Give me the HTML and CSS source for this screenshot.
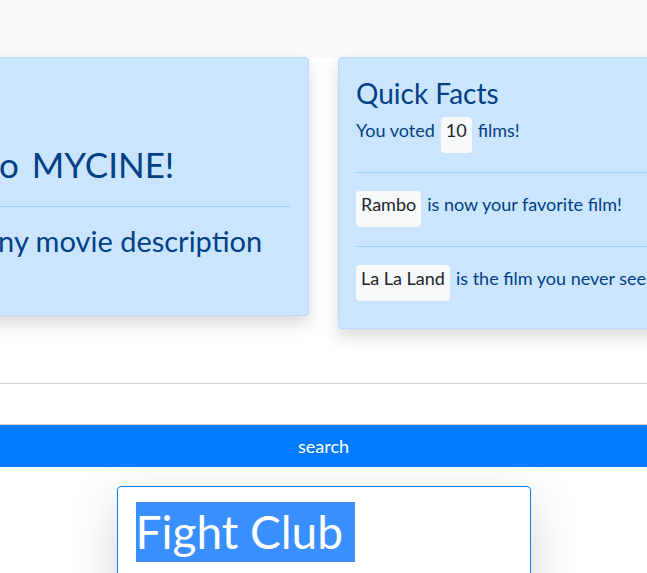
FILE: index.html
```html
<!DOCTYPE html>
<html lang="en">
<head>
<meta charset="utf-8">
<title>MYCINE</title>
<link rel="stylesheet" href="styles.css">
</head>
<body>
<div class="topbar"></div>
<div class="cards">
  <section class="card welcome">
    <h1 class="welcome-title">Welcome to MYCINE!</h1>
    <hr class="card-rule">
    <p class="welcome-text">You can get any movie description</p>
  </section>
  <section class="card facts">
    <h3 class="facts-title">Quick Facts</h3>
    <div class="fact"><span>You voted</span><span class="badge">10</span><span>films!</span></div>
    <hr class="card-rule">
    <div class="fact"><span class="badge">Rambo</span><span>is now your favorite film!</span></div>
    <hr class="card-rule">
    <div class="fact"><span class="badge">La La Land</span><span>is the film you never seen!</span></div>
  </section>
</div>
<hr class="page-rule">
<button class="search-bar" type="button">search</button>
<div class="search-box">
  <span class="selected">Fight Club </span>
</div>
</body>
</html>
```
FILE: styles.css
```css
* { box-sizing: border-box; }
html, body { margin: 0; padding: 0; }
body {
  background: #fff;
  font-family: Lato, "Noto Sans", sans-serif;
  color: #004085;
  overflow: hidden;
  width: 647px;
  height: 573px;
}
.topbar {
  height: 57px;
  background: #f8f9fa;
}
.cards {
  display: flex;
  align-items: flex-start;
  gap: 29px;
  margin-left: -190px;
  white-space: nowrap;
}
.card {
  flex: none;
  background: #cce5ff;
  border: 1px solid #b8daff;
  border-radius: 4px;
  box-shadow: 0 8px 16px rgba(0,0,0,.15);
}
.welcome {
  width: 499px;
  padding: 85px 18px 57px;
}
.welcome-title {
  margin: 0;
  font-size: 35px;
  font-weight: 400;
  line-height: 42px;
  word-spacing: 4px;
}
.welcome .card-rule { margin: 21px 0 17px; }
.welcome-text {
  margin: 0;
  font-size: 29px;
  line-height: 34px;
}
.card-rule {
  border: 0;
  border-top: 1px solid #9fcdff;
  height: 0;
}
.facts {
  width: 340px;
  padding: 18px 17px 27px;
}
.facts-title {
  margin: 0 0 7px;
  font-size: 28px;
  font-weight: 400;
  line-height: 34px;
}
.fact {
  display: flex;
  align-items: baseline;
  gap: 6px;
  height: 36px;
  font-size: 18px;
}
.facts .card-rule { margin: 19px 0 18px; }
.badge {
  display: inline-block;
  background: #f8f9fa;
  color: #212529;
  border-radius: 4px;
  padding: 2px 5px 12px;
  line-height: 22px;
  height: 36px;
}
.page-rule {
  border: 0;
  border-top: 1px solid #d4d4d4;
  margin: 54px 0 0;
  height: 0;
}
.search-bar {
  display: block;
  width: 100%;
  margin-top: 40px;
  height: 43px;
  border: 0;
  border-top: 1px solid #d6d6d6;
  background: #007bff;
  color: #fff;
  font-family: Lato, "Noto Sans", sans-serif;
  font-size: 18px;
  padding: 0;
}
.search-box {
  width: 414px;
  margin: 19px auto 0;
  border: 1px solid #007bff;
  border-radius: 4px;
  padding: 15px 18px;
  height: 120px;
  background: #fff;
  box-shadow: 0 16px 48px rgba(0,0,0,.175);
}
.selected {
  display: inline-block;
  background: #3a8ffe;
  color: #fff;
  font-size: 46px;
  line-height: 60px;
  height: 60px;
  padding-right: 12px;
}
```
